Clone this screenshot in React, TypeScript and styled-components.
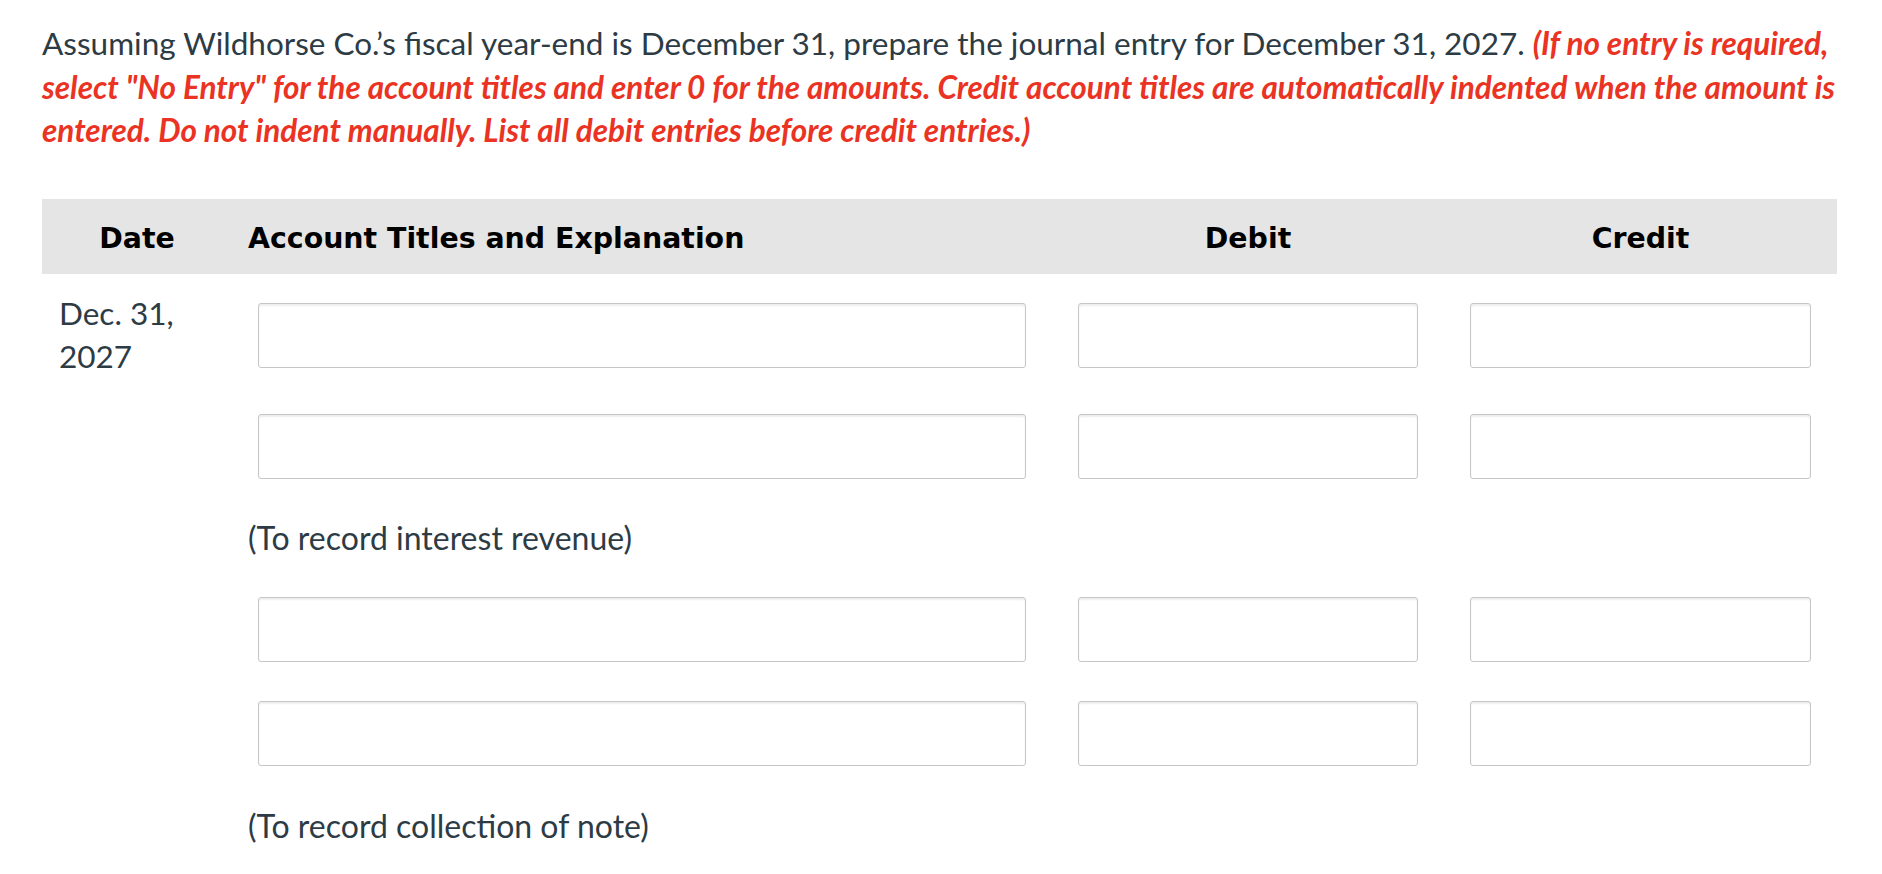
import React from 'react';
import styled, { createGlobalStyle } from 'styled-components';

const GlobalStyle = createGlobalStyle`
  html, body {
    margin: 0;
    padding: 0;
    background: #ffffff;
  }
  body {
    font-family: Lato, "Open Sans", sans-serif;
    color: #2d3b45;
  }
`;

const COLUMNS = '190px 820px 392px 393px';

const Page = styled.div`
  padding: 22px 45px 40px 42px;
`;

const Prompt = styled.p`
  margin: 0;
  font-size: 31.5px;
  line-height: 43.5px;
`;

const Instruction = styled.span`
  color: #ea3323;
  font-weight: 700;
  font-style: italic;
`;

const Journal = styled.div`
  margin-top: 46px;
  width: 1795px;
`;

const HeaderRow = styled.div`
  display: grid;
  grid-template-columns: ${COLUMNS};
  align-items: center;
  box-sizing: border-box;
  height: 75px;
  padding-top: 5px;
  background: #e5e5e5;
  font-family: "DejaVu Sans", Verdana, sans-serif;
  font-weight: 700;
  font-size: 28.4px;
  color: #000000;
`;

const HeadCell = styled.div<{ $align: 'left' | 'center' }>`
  padding: 0 16px;
  text-align: ${(p) => p.$align};
`;

const EntryRow = styled.div<{ $gap: number }>`
  display: grid;
  grid-template-columns: ${COLUMNS};
  align-items: start;
  margin-top: ${(p) => p.$gap}px;
`;

const DateCell = styled.div`
  margin-top: -11px;
  padding-left: 17px;
  font-size: 31.5px;
  line-height: 43px;
`;

const FieldCell = styled.div`
  padding: 0 26px;
`;

const Field = styled.input`
  display: block;
  width: 100%;
  height: 65px;
  box-sizing: border-box;
  margin: 0;
  border: 1px solid #c6c6c6;
  border-radius: 3px;
  background: #ffffff;
  box-shadow: inset 0 2px 2px rgba(0, 0, 0, 0.07);
  outline: none;
`;

const MemoRow = styled.div<{ $gap: number }>`
  display: grid;
  grid-template-columns: ${COLUMNS};
  margin-top: ${(p) => p.$gap}px;
`;

const MemoText = styled.div`
  grid-column: 2 / span 3;
  padding-left: 16px;
  font-size: 32px;
  line-height: 43px;
`;

type Line = { kind: 'entry'; gap: number; date?: string[] } | { kind: 'memo'; gap: number; text: string };

const lines: Line[] = [
  { kind: 'entry', gap: 29, date: ['Dec. 31,', '2027'] },
  { kind: 'entry', gap: 36 },
  { kind: 'memo', gap: 37, text: '(To record interest revenue)' },
  { kind: 'entry', gap: 38 },
  { kind: 'entry', gap: 39 },
  { kind: 'memo', gap: 38, text: '(To record collection of note)' },
];

export default function App() {
  return (
    <>
      <GlobalStyle />
      <Page>
        <Prompt>
          Assuming Wildhorse Co.’s fiscal year-end is December 31, prepare the journal entry for December 31, 2027.{' '}
          <Instruction>
            (If no entry is required, select "No Entry" for the account titles and enter 0 for the amounts. Credit
            account titles are automatically indented when the amount is entered. Do not indent manually. List all
            debit entries before credit entries.)
          </Instruction>
        </Prompt>
        <Journal>
          <HeaderRow>
            <HeadCell $align="center">Date</HeadCell>
            <HeadCell $align="left">Account Titles and Explanation</HeadCell>
            <HeadCell $align="center">Debit</HeadCell>
            <HeadCell $align="center">Credit</HeadCell>
          </HeaderRow>
          {lines.map((line, i) =>
            line.kind === 'entry' ? (
              <EntryRow key={i} $gap={line.gap}>
                <DateCell>
                  {line.date?.map((d) => (
                    <div key={d}>{d}</div>
                  ))}
                </DateCell>
                <FieldCell>
                  <Field type="text" />
                </FieldCell>
                <FieldCell>
                  <Field type="text" />
                </FieldCell>
                <FieldCell>
                  <Field type="text" />
                </FieldCell>
              </EntryRow>
            ) : (
              <MemoRow key={i} $gap={line.gap}>
                <MemoText>{line.text}</MemoText>
              </MemoRow>
            )
          )}
        </Journal>
      </Page>
    </>
  );
}
